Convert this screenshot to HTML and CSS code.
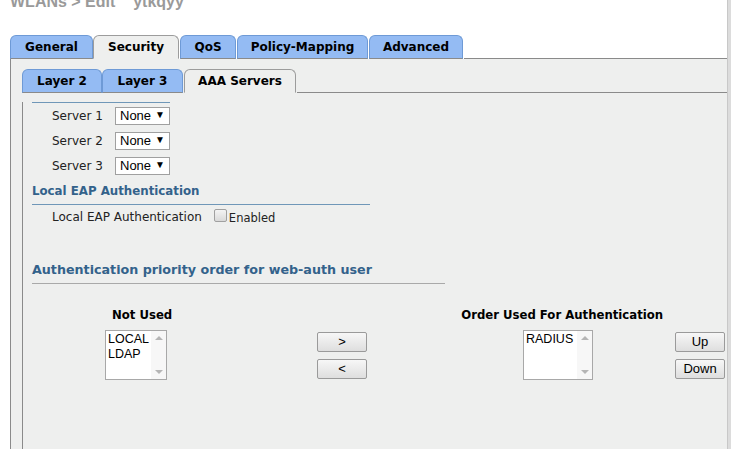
FILE: index.html
```html
<!DOCTYPE html>
<html>
<head>
<meta charset="utf-8">
<link rel="stylesheet" href="styles.css">
</head>
<body>
<div class="page">
  <div class="main">
    <div class="title">WLANs &gt; Edit<span class="title-name">'ytkqyy'</span></div>

    <div class="tabs outer-tabs">
      <div class="tab">General</div>
      <div class="tab active">Security</div>
      <div class="tab">QoS</div>
      <div class="tab">Policy-Mapping</div>
      <div class="tab">Advanced</div>
      <div class="tab-fill"></div>
    </div>
    <div class="panel outer-panel">
      <div class="tabs inner-tabs">
        <div class="tab">Layer 2</div>
        <div class="tab">Layer 3</div>
        <div class="tab active">AAA Servers</div>
        <div class="tab-fill"></div>
      </div>
      <div class="panel inner-panel">
        <div class="rule-blue rule-short"></div>
        <div class="server-row"><span class="label">Server 1</span><div class="fake-select"><span>None</span><span class="arrow">&#9660;</span></div></div>
        <div class="server-row"><span class="label">Server 2</span><div class="fake-select"><span>None</span><span class="arrow">&#9660;</span></div></div>
        <div class="server-row"><span class="label">Server 3</span><div class="fake-select"><span>None</span><span class="arrow">&#9660;</span></div></div>

        <div class="section-head eap-head">Local EAP Authentication</div>
        <div class="rule-blue rule-eap"></div>
        <div class="eap-row"><span class="label eap-label">Local EAP Authentication</span><span class="checkbox"></span><span class="enabled">Enabled</span></div>

        <div class="section-head auth-head">Authentication priority order for web-auth user</div>
        <div class="rule-gray"></div>

        <div class="col-heads">
          <span class="col-head not-used">Not Used</span>
          <span class="col-head order-used">Order Used For Authentication</span>
        </div>
        <div class="lists-row">
          <div class="listbox list-left">
            <div class="list-items"><div>LOCAL</div><div>LDAP</div></div>
            <div class="list-scroll"><span class="sa up"></span><span class="sa down"></span></div>
          </div>
          <div class="btn-col move-col">
            <div class="btn">&gt;</div>
            <div class="btn">&lt;</div>
          </div>
          <div class="listbox list-right">
            <div class="list-items"><div>RADIUS</div></div>
            <div class="list-scroll"><span class="sa up"></span><span class="sa down"></span></div>
          </div>
          <div class="btn-col order-col">
            <div class="btn">Up</div>
            <div class="btn">Down</div>
          </div>
        </div>
      </div>
    </div>
  </div>
  <div class="vstrip"></div>
</div>
</body>
</html>
```

FILE: styles.css
```css
html, body {
  margin: 0;
  padding: 0;
  background: #ffffff;
  overflow: hidden;
  height: 449px;
}
.page {
  display: flex;
  height: 449px;
}
.main {
  flex: 1;
  min-width: 0;
}
.vstrip {
  width: 3px;
  background: #dcdcdc;
  border-left: 1px solid #c8c8c8;
}
.title {
  font-family: "Liberation Sans", Arial, sans-serif;
  font-weight: bold;
  font-size: 16px;
  line-height: 19px;
  color: #9a9a9a;
  margin: -8px 0 0 10px;
  height: 19px;
  white-space: nowrap;
}
.title-name {
  margin-left: 14px;
}
.tabs {
  display: flex;
  align-items: flex-end;
  font-family: "DejaVu Sans", Verdana, sans-serif;
  font-weight: bold;
  font-size: 12px;
}
.outer-tabs {
  margin-top: 24px;
  padding-left: 10px;
}
.tab {
  box-sizing: border-box;
  height: 24px;
  line-height: 22px;
  text-align: center;
  background: #94bbf3;
  border: 1px solid #6e9ad6;
  border-bottom: 1px solid #8a8a8a;
  border-radius: 6px 6px 0 0;
  color: #000;
  margin-right: 1px;
  white-space: nowrap;
}
.tab.active {
  background: #eeefee;
  border-color: #9c9c9c;
  border-bottom: 1px solid #eeefee;
}
.tab-fill {
  flex: 1;
  border-bottom: 1px solid #8a8a8a;
}
.outer-tabs .tab:nth-child(1) { width: 83px; margin-right: 0; }
.outer-tabs .tab:nth-child(2) { width: 86px; }
.outer-tabs .tab:nth-child(3) { width: 56px; }
.outer-tabs .tab:nth-child(4) { width: 131px; }
.outer-tabs .tab:nth-child(5) { width: 94px; }

.panel {
  background: #eeefee;
}
.outer-panel {
  margin-left: 10px;
  border-left: 1px solid #8a8a8a;
  padding: 10px 0 0 11px;
  height: 400px;
}
.inner-tabs .tab:nth-child(1) { width: 80px; margin-right: 0; }
.inner-tabs .tab:nth-child(2) { width: 81px; margin-right: 1px; }
.inner-tabs .tab:nth-child(3) { width: 112px; }

.inner-panel {
  border-left: 1px solid #8a8a8a;
  padding: 0 0 0 9px;
  height: 400px;
  font-family: "DejaVu Sans", Verdana, sans-serif;
  font-size: 12px;
  color: #222;
}
.rule-blue {
  height: 1px;
  background: #6f97b8;
}
.rule-short {
  margin-top: 9px;
  width: 138px;
}
.server-row {
  height: 25px;
  display: flex;
  align-items: center;
}
.label {
  margin-left: 20px;
  width: 63px;
  color: #222;
}
.fake-select {
  height: 16px;
  background: #fff;
  border: 1px solid #a0a0a0;
  display: flex;
  align-items: center;
  font-family: "Liberation Sans", Arial, sans-serif;
  font-size: 13px;
  color: #000;
  padding-left: 4px;
  box-sizing: content-box;
  width: 49px;
}
.fake-select .arrow {
  font-size: 10px;
  margin-left: 4px;
  margin-top: -3px;
}
.section-head {
  font-weight: bold;
  color: #33628b;
  font-size: 12px;
}
.eap-head {
  height: 26px;
  line-height: 27px;
  font-size: 11.8px;
}
.rule-eap {
  width: 338px;
}
.eap-row {
  height: 24px;
  display: flex;
  align-items: center;
}
.eap-label {
  width: auto;
  margin-right: 12px;
}
.checkbox {
  width: 11px;
  height: 11px;
  border: 1px solid #a0a0a0;
  border-radius: 2px;
  background: linear-gradient(#f4f4f4, #d9d9d9);
  margin-top: -3px;
}
.enabled {
  margin-left: 2px;
  margin-top: 2px;
  font-size: 11.5px;
}
.auth-head {
  margin-top: 28px;
  height: 24px;
  line-height: 26px;
  font-size: 12.7px;
}
.rule-gray {
  margin-top: 2px;
  width: 413px;
  height: 1px;
  background: #a9a9a9;
}
.col-heads {
  margin-top: 20px;
  height: 22px;
  line-height: 22px;
  display: flex;
  align-items: center;
  font-weight: bold;
  color: #000;
}
.not-used {
  margin-left: 80px;
  font-size: 11.7px;
}
.order-used {
  margin-left: 289px;
  font-size: 11.7px;
}
.lists-row {
  margin-top: 4px;
  display: flex;
  align-items: flex-start;
}
.listbox {
  height: 48px;
  background: #fff;
  border: 1px solid #a8a8a8;
  display: flex;
  font-family: "Liberation Sans", Arial, sans-serif;
  font-size: 12.5px;
  color: #000;
}
.list-left {
  margin-left: 73px;
  width: 60px;
}
.list-right {
  margin-left: 156px;
  width: 68px;
}
.list-items {
  flex: 1;
  padding: 1px 0 0 2px;
  line-height: 15px;
}
.list-scroll {
  width: 15px;
  background: #f7f7f7;
  display: flex;
  flex-direction: column;
  justify-content: space-between;
  align-items: center;
  padding: 5px 0 5px;
}
.sa {
  width: 0;
  height: 0;
  border-left: 4px solid transparent;
  border-right: 4px solid transparent;
}
.sa.up { border-bottom: 4px solid #b5b5b5; }
.sa.down { border-top: 4px solid #b5b5b5; }
.btn-col {
  display: flex;
  flex-direction: column;
  gap: 7px;
  margin-top: 2px;
}
.move-col {
  margin-left: 150px;
}
.order-col {
  margin-left: 82px;
}
.btn {
  width: 48px;
  height: 18px;
  line-height: 18px;
  text-align: center;
  border: 1px solid #9a9a9a;
  border-radius: 2px;
  background: linear-gradient(#f7f7f7, #dedede);
  font-family: "Liberation Sans", Arial, sans-serif;
  font-size: 13px;
  color: #000;
}
```
